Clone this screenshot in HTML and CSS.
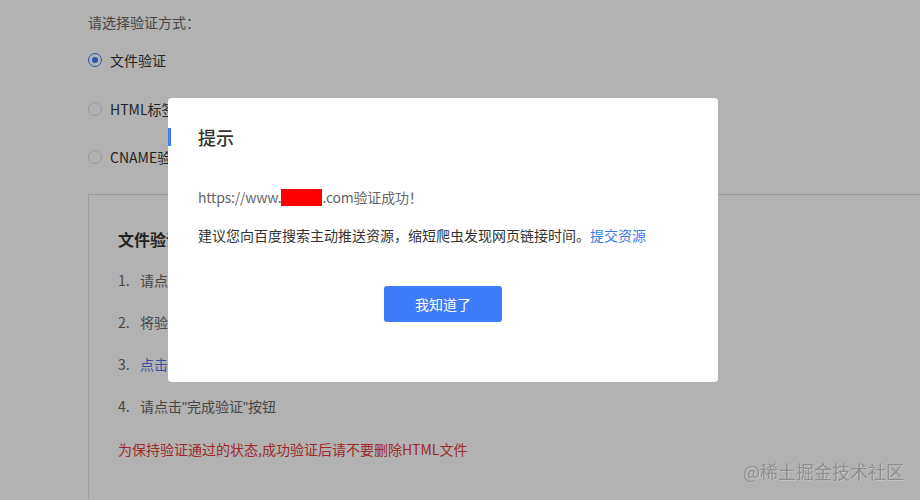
FILE: index.html
```html
<!DOCTYPE html>
<html lang="zh-CN">
<head>
  <meta charset="UTF-8">
  <meta name="viewport" content="width=device-width, initial-scale=1.0">
  <title>站点验证</title>
  <link rel="stylesheet" href="styles.css">
</head>
<body>

<div class="page">
  <div class="choose-label">请选择验证方式：</div>

  <!-- verify methods -->
  <div class="radio-row"><span class="radio checked"></span>文件验证</div>
  <div class="radio-row"><span class="radio"></span>HTML标签验证</div>
  <div class="radio-row"><span class="radio"></span>CNAME验证</div>

  <div class="verify-box">
    <h3>文件验证</h3>
    <div class="step"><span class="num">1.</span>请点击 <a class="blue">下载验证文件</a> 获取验证文件</div>
    <div class="step"><span class="num">2.</span>将验证文件放置于您所配置域名的根目录下</div>
    <div class="step"><span class="num">3.</span><a class="blue">点击这里</a>确认验证文件可以正常访问</div>
    <div class="step"><span class="num">4.</span>请点击<span class="q">"</span>完成验证<span class="q">"</span>按钮</div>
    <div class="warn">为保持验证通过的状态,成功验证后请不要删除HTML文件</div>
  </div>
</div>

<!-- Overlay -->
<div class="overlay"></div>

<!-- Popup -->
<div class="dialog">
  <div class="dialog-title">提示</div>
  <div class="dialog-body">
    <p class="msg">https://www.<span class="mask"></span>.com验证成功！</p>
    <p class="tip">建议您向百度搜索主动推送资源，缩短爬虫发现网页链接时间。<a class="link">提交资源</a></p>
  </div>
  <div class="dialog-footer">
    <button class="btn-primary">我知道了</button>
  </div>
</div>

<div class="watermark">@稀土掘金技术社区</div>

</body>
</html>
```

FILE: styles.css
```css
html, body {
  height: 100%;
  overflow: hidden;
}

body {
  margin: 0;
  background-color: #fff;
  font-family: "Noto Sans CJK SC", "Noto Sans", sans-serif;
  font-size: 14px;
  color: #333;
}

.page {
  padding: 12px 0 0 88px;
}

.choose-label {
  line-height: 20px;
  color: #666;
}

/* radio list */
.radio-row {
  display: flex;
  align-items: center;
  height: 20px;
  margin-top: 28px;
  color: #333;
}

.choose-label + .radio-row {
  margin-top: 18px;
}

.choose-label + .radio-row + .radio-row {
  margin-top: 29px;
}

.radio {
  box-sizing: border-box;
  width: 14px;
  height: 14px;
  margin-right: 8px;
  border: 1px solid #d9d9d9;
  border-radius: 50%;
  background: #fff;
  position: relative;
}

.radio.checked {
  border-color: #3e7bfa;
}

.radio.checked::after {
  content: "";
  position: absolute;
  top: 3px;
  left: 3px;
  width: 6px;
  height: 6px;
  border-radius: 50%;
  background: #3e7bfa;
}

/* file verify box, runs past the bottom of the window */
.verify-box {
  margin-top: 27px;
  height: 272px;
  padding: 32px 0 0 29px;
  border: 1px solid #ddd;
  border-right: none;
  border-bottom: none;
}

.verify-box h3 {
  margin: 0;
  font-size: 16px;
  line-height: 24px;
  font-weight: bold;
  color: #333;
}

.step {
  margin-top: 22px;
  line-height: 20px;
  color: #666;
}

.verify-box h3 + .step {
  margin-top: 19px;
}

.step .num {
  display: inline-block;
  width: 22px;
}

.q {
  font-family: "Liberation Sans", sans-serif;
}

.blue {
  color: #4a78e6;
}

.warn {
  margin-top: 22px;
  line-height: 20px;
  color: #e23b3b;
}

/* Styles for overlay */
.overlay {
  position: fixed;
  top: 0;
  left: 0;
  width: 100%;
  height: 100%;
  background-color: rgba(0, 0, 0, 0.3);
  z-index: 999;
}

/* Styles for the popup */
.dialog {
  position: fixed;
  top: 98px;
  left: 168px;
  width: 550px;
  height: 284px;
  box-sizing: border-box;
  padding: 26px 30px 0 30px;
  background-color: #fff;
  border-radius: 4px;
  z-index: 1000;
}

.dialog-title {
  position: relative;
  font-size: 18px;
  line-height: 26px;
  font-weight: 500;
  color: #333;
}

/* blue mark on the left edge */
.dialog-title::before {
  content: "";
  position: absolute;
  left: -30px;
  top: 4px;
  width: 3px;
  height: 18px;
  background: #3e7bfa;
}

.dialog-body p {
  margin: 0;
  line-height: 20px;
}

.msg {
  margin-top: 37px !important;
  color: #666;
  letter-spacing: -0.2px;
}

.mask {
  display: inline-block;
  width: 41px;
  height: 17px;
  vertical-align: -3px;
  background: #ff0000;
}

.tip {
  margin-top: 18px !important;
  color: #333;
}

.link {
  color: #3d7de8;
}

.dialog-footer {
  margin-top: 41px;
  text-align: center;
}

.btn-primary {
  width: 118px;
  height: 36px;
  border: none;
  border-radius: 3px;
  background: #3e7bfa;
  color: #fff;
  font-family: inherit;
  font-size: 14px;
}

.watermark {
  position: fixed;
  right: 16px;
  bottom: 16px;
  z-index: 1001;
  font-size: 18px;
  line-height: 26px;
  color: #8e8e8e;
  text-shadow: 1px 1px 0 #c4c4c4;
}
```
